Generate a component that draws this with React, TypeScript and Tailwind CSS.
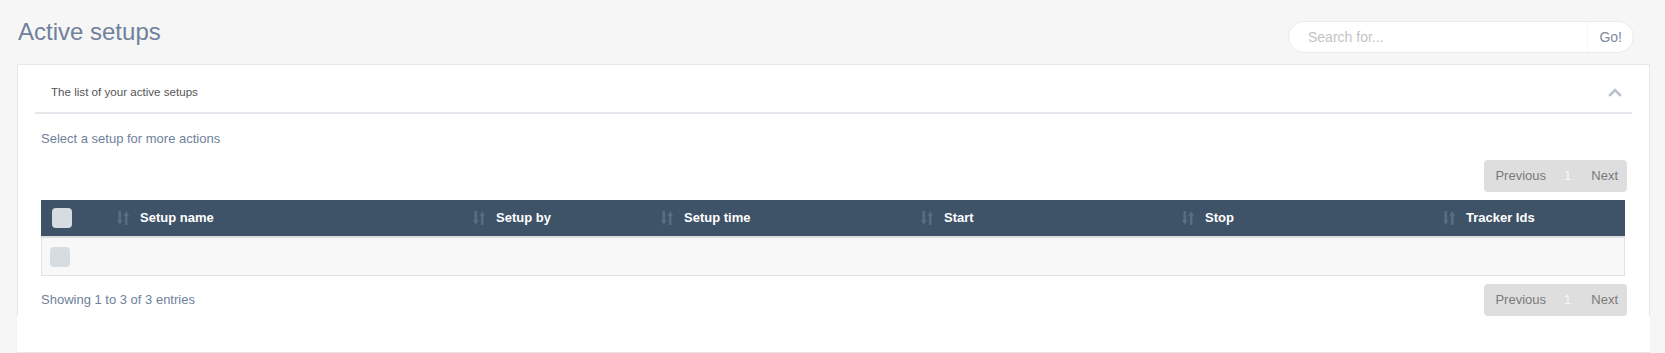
import React from 'react';

const font = { fontFamily: '"Liberation Sans", Arial, sans-serif' };

const SortIcon: React.FC = () => (
  <svg width="12" height="14" viewBox="0 0 12 14" className="shrink-0" fill="#5a6c7e">
    <rect x="1.5" y="0" width="2.6" height="10" />
    <polygon points="0,9 5.6,9 2.8,14" />
    <rect x="7.9" y="4" width="2.6" height="10" />
    <polygon points="6.4,5 12,5 9.2,0" />
  </svg>
);

const Pager: React.FC = () => (
  <div className="flex items-center h-[32px] rounded-[4px] bg-[#dedede] text-[13px]">
    <span className="pl-[11px] pr-[11px] text-[#7a7a7a]">Previous</span>
    <span className="pl-[7px] pr-[11px] text-[#f7f7f7]">1</span>
    <span className="pl-[9px] pr-[9px] text-[#7a7a7a]">Next</span>
  </div>
);

const Checkbox: React.FC = () => (
  <div className="w-[20px] h-[20px] rounded-[4px] bg-[#d6dde1]" />
);

const columns = ['Setup name', 'Setup by', 'Setup time', 'Start', 'Stop', 'Tracker Ids'];

export default function App() {
  return (
    <div className="w-full min-h-[353px] bg-[#f6f6f6]" style={font}>
      <div className="flex justify-between items-start h-[64px] pl-[18px] pr-[31px]">
        <h1 className="mt-[19px] text-[24px] leading-[26px] text-[#6f819b]">Active setups</h1>
        <div className="mt-[21px] flex items-center w-[346px] h-[32px] rounded-full bg-white border border-[#e7eaee]">
          <span className="flex-1 pl-[19px] text-[14px] text-[#c4c4c4]">Search for...</span>
          <span className="h-full flex items-center pl-[11px] pr-[11px] border-l border-[#f7f7f7] text-[14px] text-[#7b8aa0]">Go!</span>
        </div>
      </div>

      <div className="ml-[17px] mr-[15px] bg-white border-b border-[#e6e6e6]">
        <div className="border-t border-x border-[#e4e8ee]">
          <div className="mx-[17px] h-[49px] pt-[7px] flex items-center justify-between border-b-2 border-[#e4e8ec]">
            <span className="pl-[16px] text-[11.6px] text-[#555555]">The list of your active setups</span>
            <svg width="14" height="9" viewBox="0 0 14 9" className="mr-[10px]" fill="none" stroke="#b9c1ca" strokeWidth="2.6">
              <polyline points="1.2,7.8 7,2 12.8,7.8" />
            </svg>
          </div>

          <div className="pl-[23px] pr-[22px]">
            <p className="mt-[16px] text-[13px] leading-[18px] text-[#6f819b]">Select a setup for more actions</p>
            <div className="mt-[12px] flex justify-end">
              <Pager />
            </div>

            <div className="mt-[8px] mr-[2px]">
              <div className="grid grid-cols-[66px_356px_188px_260px_261px_261px_1fr] h-[38px] bg-[#3e5368] border-b-2 border-[#dedede] items-center">
                <div className="pl-[11px]">
                  <Checkbox />
                </div>
                {columns.map((c) => (
                  <div key={c} className="flex items-center gap-[11px] pl-[10px]">
                    <SortIcon />
                    <span className="text-[13px] font-bold text-white">{c}</span>
                  </div>
                ))}
              </div>
              <div className="h-[38px] flex items-center pl-[8px] bg-[#f8f8f8] border-x border-b border-[#e2e2e2]">
                <Checkbox />
              </div>
            </div>

            <div className="mt-[8px] flex items-center justify-between">
              <span className="text-[13px] text-[#6f819b]">Showing 1 to 3 of 3 entries</span>
              <Pager />
            </div>
          </div>
        </div>
        <div className="h-[36px]" />
      </div>
    </div>
  );
}
